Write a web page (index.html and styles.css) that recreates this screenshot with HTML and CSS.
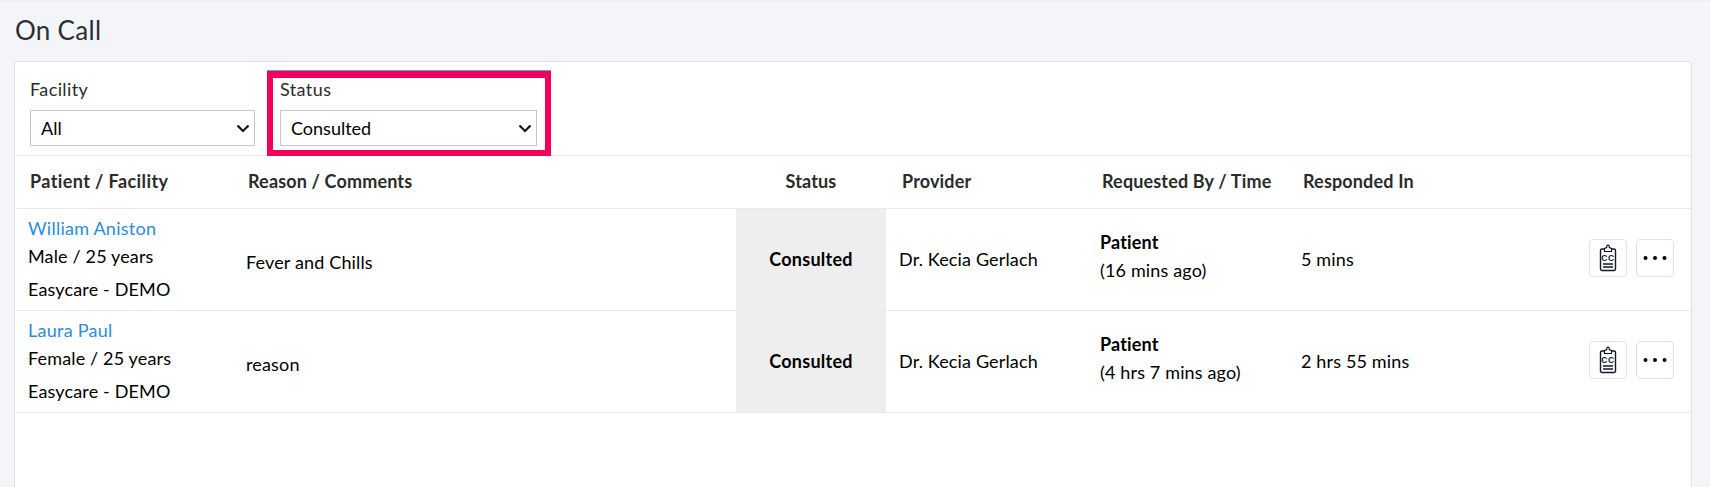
FILE: index.html
```html
<!DOCTYPE html>
<html lang="en">
<head>
  <meta charset="UTF-8">
  <title>On Call</title>
  <link rel="stylesheet" href="styles.css">
</head>
<body>
  <h1 class="page-title">On Call</h1>

  <div class="card">
    <div class="filters">
      <div class="filter">
        <label for="facility">Facility</label>
        <select id="facility"><option>All</option></select>
      </div>
      <div class="filter filter-status">
        <label for="status">Status</label>
        <select id="status"><option>Consulted</option></select>
      </div>
      <div class="highlight"></div>
    </div>

    <table class="calls">
      <colgroup>
        <col class="col-patient">
        <col class="col-reason">
        <col class="col-status">
        <col class="col-provider">
        <col class="col-requested">
        <col class="col-responded">
        <col>
      </colgroup>
      <thead>
        <tr>
          <th>Patient / Facility</th>
          <th>Reason / Comments</th>
          <th class="center">Status</th>
          <th>Provider</th>
          <th>Requested By / Time</th>
          <th>Responded In</th>
          <th></th>
        </tr>
      </thead>
      <tbody>
        <tr>
          <td class="patient">
            <a class="name" href="#">William Aniston</a>
            <div class="info">Male / 25 years</div>
            <div class="site">Easycare - DEMO</div>
          </td>
          <td class="reason">Fever and Chills</td>
          <td class="state">Consulted</td>
          <td>Dr. Kecia Gerlach</td>
          <td class="requested"><b>Patient</b><div class="ago">(16 mins ago)</div></td>
          <td class="responded">5 mins</td>
          <td>
            <div class="actions">
              <button class="icon-btn" aria-label="Chief complaint">
                <svg width="20" height="28" viewBox="0 0 20 28"><path d="M6.500 5H4a1.500 1.500 0 0 0-1.500 1.500v18.500A1.500 1.500 0 0 0 4 26.500h12a1.500 1.500 0 0 0 1.500-1.500V6.500A1.500 1.500 0 0 0 16 5h-2.500" fill="none" stroke="#111827" stroke-width="1.400"/><path d="M6.500 7.500V4.500L8.700 3.500V2.500a1.300 1.300 0 0 1 2.600 0v1l2.200 1v3z" fill="#fff" stroke="#111827" stroke-width="1.200"/><text x="10" y="16.800" class="cc">CC</text><path d="M5 20h10M5 23h10" stroke="#111827" stroke-width="1.400"/></svg>
              </button>
              <button class="icon-btn" aria-label="More">
                <svg width="24" height="6" viewBox="0 0 24 6"><circle cx="2.500" cy="3" r="2"/><circle cx="12" cy="3" r="2"/><circle cx="21.500" cy="3" r="2"/></svg>
              </button>
            </div>
          </td>
        </tr>
        <tr>
          <td class="patient">
            <a class="name" href="#">Laura Paul</a>
            <div class="info">Female / 25 years</div>
            <div class="site">Easycare - DEMO</div>
          </td>
          <td class="reason">reason</td>
          <td class="state">Consulted</td>
          <td>Dr. Kecia Gerlach</td>
          <td class="requested"><b>Patient</b><div class="ago">(4 hrs 7 mins ago)</div></td>
          <td class="responded">2 hrs 55 mins</td>
          <td>
            <div class="actions">
              <button class="icon-btn" aria-label="Chief complaint">
                <svg width="20" height="28" viewBox="0 0 20 28"><path d="M6.500 5H4a1.500 1.500 0 0 0-1.500 1.500v18.500A1.500 1.500 0 0 0 4 26.500h12a1.500 1.500 0 0 0 1.500-1.500V6.500A1.500 1.500 0 0 0 16 5h-2.500" fill="none" stroke="#111827" stroke-width="1.400"/><path d="M6.500 7.500V4.500L8.700 3.500V2.500a1.300 1.300 0 0 1 2.600 0v1l2.200 1v3z" fill="#fff" stroke="#111827" stroke-width="1.200"/><text x="10" y="16.800" class="cc">CC</text><path d="M5 20h10M5 23h10" stroke="#111827" stroke-width="1.400"/></svg>
              </button>
              <button class="icon-btn" aria-label="More">
                <svg width="24" height="6" viewBox="0 0 24 6"><circle cx="2.500" cy="3" r="2"/><circle cx="12" cy="3" r="2"/><circle cx="21.500" cy="3" r="2"/></svg>
              </button>
            </div>
          </td>
        </tr>
      </tbody>
    </table>
  </div>
</body>
</html>
```

FILE: styles.css
```css
html, body { height: 100%; }
body {
  margin: 0;
  padding: 0 18px 0 14px;
  box-sizing: border-box;
  overflow: hidden;
  background: #f4f5f9;
  border-top: 1px solid #eceef2;
  color: #000;
  font-family: Lato, "Open Sans", sans-serif;
  font-size: 18px;
}

.page-title {
  margin: 0;
  padding: 12px 1px 14px;
  height: 34px;
  line-height: 34px;
  font-size: 26px;
  font-weight: 400;
  color: #2b2f33;
  letter-spacing: 0.3px;
}

.card {
  height: 425px;
  background: #fff;
  border: 1px solid #dfe1e5;
  border-bottom: 0;
  border-radius: 4px 4px 0 0;
}

.filters {
  position: relative;
  display: flex;
  gap: 25px;
  height: 93px;
  padding: 0 15px;
  border-bottom: 1px solid #e8e8e8;
}
.filter { padding-top: 17px; }
.filter label {
  display: block;
  height: 31px;
  line-height: 20px;
  color: #2b2b2b;
  letter-spacing: 0.4px;
}
.filter select {
  display: block;
  width: 225px;
  height: 36px;
  padding: 0 30px 0 10px;
  background: #fff url("data:image/svg+xml,%3Csvg xmlns='http://www.w3.org/2000/svg' width='14' height='9' viewBox='0 0 14 9'%3E%3Cpath d='M1.500 1.500 7 7l5.500-5.500' fill='none' stroke='%23111' stroke-width='2.200'/%3E%3C/svg%3E") no-repeat right 4px center;
  border: 1px solid #c8c8c8;
  border-radius: 0;
  appearance: none;
  font-family: inherit;
  font-size: 18px;
  color: #000;
}
.filter-status select { width: 257px; }

.highlight {
  position: absolute;
  left: 252px;
  top: 9px;
  width: 284px;
  height: 85px;
  box-sizing: border-box;
  border: 6px solid #f50057;
  border-top-width: 7px;
  box-shadow: 0 -1px 0 #5aa5e0;
}

.calls {
  width: 100%;
  border-collapse: collapse;
  table-layout: fixed;
}
.col-patient { width: 217px; }
.col-reason { width: 504px; }
.col-status { width: 150px; }
.col-provider { width: 200px; }
.col-requested { width: 201px; }
.col-responded { width: 200px; }

.calls th {
  height: 52px;
  padding: 0 0 2px 16px;
  box-sizing: border-box;
  text-align: left;
  font-weight: 700;
  color: #2b2b2b;
  letter-spacing: 0.15px;
  border-bottom: 1px solid #e8e8e8;
}
.calls th:first-child { padding-left: 15px; letter-spacing: 0.4px; }
.calls th.center { text-align: center; padding: 0 0 2px; }
.calls td {
  box-sizing: border-box;
  height: 102px;
  padding: 0 0 0 13px;
  letter-spacing: 0.15px;
  border-bottom: 1px solid #e8e8e8;
}
.calls td.patient { padding-bottom: 1px; }
.calls td.reason { padding: 6px 0 0 14px; }
.calls td.requested { padding: 0 0 6px 14px; }
.calls td.responded { padding-left: 14px; }
.calls td.state {
  padding: 0;
  text-align: center;
  font-weight: 700;
  letter-spacing: 0.25px;
  background: #eeeeee;
}

.name { display: block; color: #2a8ddb; text-decoration: none; line-height: 20px; letter-spacing: 0.25px; }
.info { margin-top: 8px; line-height: 20px; }
.site { margin-top: 13px; line-height: 20px; }
.ago { margin-top: 8px; line-height: 20px; }
td b { line-height: 20px; display: block; }

.actions { display: flex; justify-content: flex-end; gap: 9px; padding: 0 17px 2px 0; }
.icon-btn {
  display: flex;
  align-items: center;
  justify-content: center;
  width: 38px;
  height: 38px;
  padding: 0;
  background: #fff;
  border: 1px solid #e3e3e3;
  border-radius: 4px;
}
.cc {
  font-family: "Liberation Sans", sans-serif;
  font-size: 8.500px;
  font-weight: 700;
  letter-spacing: 0.6px;
  text-anchor: middle;
  fill: #111827;
}
```
